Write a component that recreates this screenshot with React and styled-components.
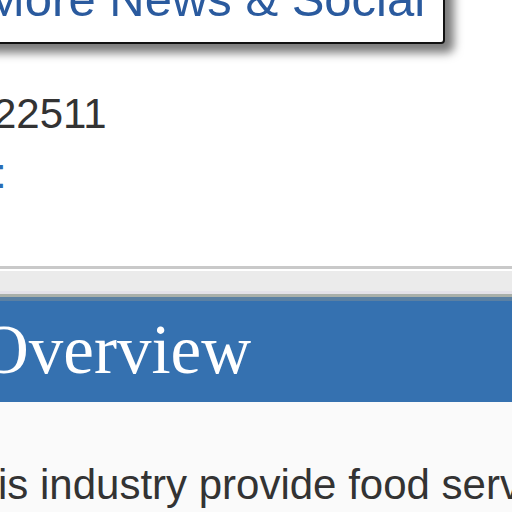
import React from "react";
import styled, { createGlobalStyle } from "styled-components";

const GlobalStyle = createGlobalStyle`
  html, body {
    margin: 0;
    padding: 0;
    background: #ffffff;
  }
  body {
    font-family: "Liberation Sans", Arial, sans-serif;
    color: #333333;
  }
`;

const Viewport = styled.div`
  width: 512px;
  height: 512px;
  overflow: hidden;
  background: #ffffff;
`;

const Page = styled.div`
  width: 600px;
  margin: -50px 0 0 -30px;
`;

const SocialButton = styled.a`
  display: block;
  width: 459px;
  padding: 19px 0 15px 12px;
  border: 2px solid #111111;
  border-radius: 4px;
  background: #ffffff;
  box-shadow: 6px 6px 10px 3px #7c7c7c;
  font-size: 49px;
  line-height: 56px;
  color: #2a5a9e;
  text-decoration: none;
  white-space: nowrap;
  overflow: hidden;
`;

const Contact = styled.div`
  margin-top: 40px;
  padding-left: 23px;
  font-size: 42px;
  line-height: 60px;
`;

const Line = styled.div`
  color: ${(p) => (p.$link ? "#2a6cb4" : "#333333")};
  margin-left: ${(p) => p.$indent || 0}px;
  white-space: nowrap;
`;

const Rule = styled.div`
  margin-top: 62px;
  height: 0;
  border-top: 3px solid #c9c9c9;
  border-bottom: 2px solid #ffffff;
`;

const HeaderBand = styled.div`
  background: #ebebeb;
  padding-top: 26px;
`;

const Bar = styled.h2`
  margin: 0;
  padding: 0 0 3px 9px;
  border-top: 4px solid #5b80a3;
  background: #3571b0;
  box-shadow: 0 -3px 0 #a9afa9, 0 -6px 0 #e4e1e8, 0 2px 0 #9c9c9c,
    0 5px 0 #c6c6c6;
  font-family: "Liberation Serif", "Times New Roman", serif;
  font-weight: normal;
  font-size: 69px;
  line-height: 98px;
  color: #ffffff;
  white-space: nowrap;
`;

const Body = styled.div`
  background: #fafafa;
  padding: 53px 0 0 28px;
  font-size: 42px;
  line-height: 60px;
  color: #333333;
  white-space: nowrap;
  height: 200px;
`;

export default function App() {
  return (
    <Viewport>
      <GlobalStyle />
      <Page>
        <SocialButton href="#">More News &amp; Social</SocialButton>
        <Contact>
          <Line>22511</Line>
          <Line $link $indent={2}>
            :
          </Line>
        </Contact>
        <Rule />
        <HeaderBand>
          <Bar>Overview</Bar>
        </HeaderBand>
        <Body>is industry provide food services</Body>
      </Page>
    </Viewport>
  );
}
